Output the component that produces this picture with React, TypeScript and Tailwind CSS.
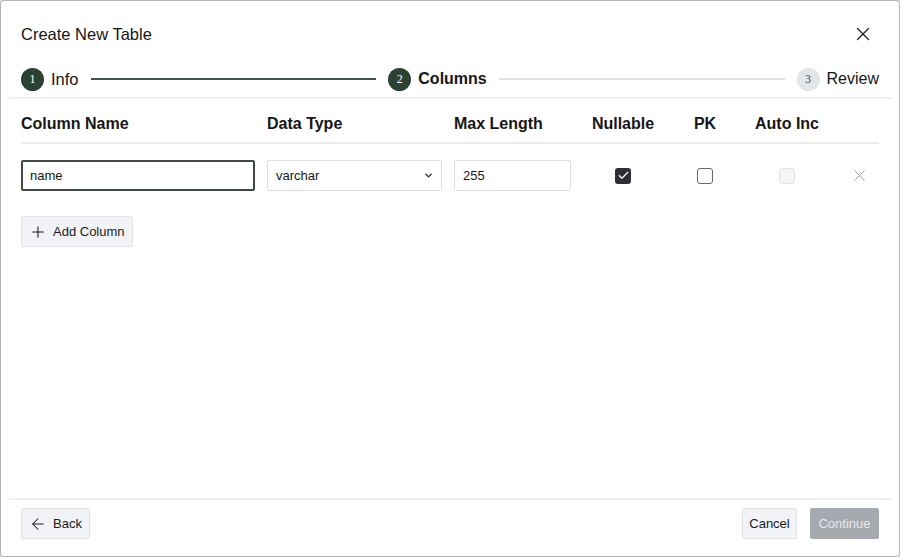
import { ArrowLeft, Check, ChevronDown, Plus, X } from 'lucide-react';

const font = { fontFamily: '"Liberation Sans", Arial, sans-serif' };

function StepDot({ n, active }: { n: number; active: boolean }) {
  return (
    <div
      className={
        active
          ? 'w-[23px] h-[23px] rounded-full bg-[#2b4233] text-white flex items-center justify-center text-[12px] shrink-0'
          : 'w-[23px] h-[23px] rounded-full bg-[#e3e5e9] text-[#444] flex items-center justify-center text-[12px] shrink-0'
      }
      style={{ fontFamily: '"Liberation Serif", "Times New Roman", serif' }}
    >
      {n}
    </div>
  );
}

export default function App() {
  const cols = 'grid grid-cols-[234px_175px_117px_80px_60px_80px_40px] gap-x-[12px] items-center';

  return (
    <div className="w-[900px] h-[557px] bg-[#d9d9d9]" style={font}>
      <div className="w-full h-full bg-white border border-[#b4b4b4] rounded-[4px] px-[8px] flex flex-col text-[#161616]">
        {/* Header */}
        <div className="px-[12px] mt-[23px] h-[20px] flex items-center justify-between">
          <h1 className="text-[16.5px] leading-[20px]">Create New Table</h1>
          <X className="w-[22px] h-[22px] text-[#222] mr-[5px]" strokeWidth={1.5} />
        </div>

        {/* Stepper */}
        <div className="px-[12px] mt-[23px] h-[24px] flex items-center">
          <StepDot n={1} active />
          <span className="ml-[7px] text-[16.5px]">Info</span>
          <div className="flex-1 h-[2px] bg-[#3f5446] mx-[12px]" />
          <StepDot n={2} active />
          <span className="ml-[7px] text-[16px] font-bold">Columns</span>
          <div className="flex-1 h-[2px] bg-[#e0e1e4] mx-[12px]" />
          <StepDot n={3} active={false} />
          <span className="ml-[7px] text-[16px]">Review</span>
        </div>

        <div className="mt-[6px] h-[2px] bg-[#efefef]" />

        {/* Table */}
        <div className="px-[12px]">
          <div className={`${cols} pt-[15px] pb-[8px] h-[43px] text-[16px] font-bold leading-[20px]`}>
            <span>Column Name</span>
            <span>Data Type</span>
            <span>Max Length</span>
            <span className="text-center">Nullable</span>
            <span className="text-center">PK</span>
            <span className="text-center">Auto Inc</span>
            <span />
          </div>
          <div className="h-[2px] bg-[#ececec]" />

          <div className={`${cols} mt-[16px] h-[31px] text-[13px]`}>
            <div className="h-[31px] border-2 border-[#3c4a40] rounded-[2px] flex items-center px-[7px]">name</div>
            <div className="h-[31px] border border-[#dedede] rounded-[2px] flex items-center justify-between pl-[8px] pr-[7px]">
              <span>varchar</span>
              <ChevronDown className="w-[11px] h-[11px] text-[#222]" strokeWidth={3} />
            </div>
            <div className="h-[31px] border border-[#dedede] rounded-[2px] flex items-center px-[8px]">255</div>
            <div className="flex justify-center">
              <div className="w-[16px] h-[16px] rounded-[3px] bg-[#2b2e35] flex items-center justify-center">
                <Check className="w-[13px] h-[13px] text-white" strokeWidth={2.2} />
              </div>
            </div>
            <div className="flex justify-center">
              <div className="w-[16px] h-[16px] rounded-[3px] border-[1.5px] border-[#6b6b6b] bg-white" />
            </div>
            <div className="flex justify-center">
              <div className="w-[16px] h-[16px] rounded-[3px] border border-[#e2e2e2] bg-[#f5f5f6]" />
            </div>
            <div className="flex justify-center">
              <X className="w-[19px] h-[19px] text-[#9c9c9c]" strokeWidth={1.2} />
            </div>
          </div>

          <button className="mt-[25px] h-[31px] w-[112px] flex items-center gap-[6px] pl-[7px] bg-[#f1f3f6] border border-[#e1e3e7] rounded-[2px] text-[13px] text-[#1a1a1a]">
            <Plus className="w-[18px] h-[18px]" strokeWidth={1.4} />
            <span>Add Column</span>
          </button>
        </div>

        <div className="flex-1" />

        {/* Footer */}
        <div className="h-[2px] bg-[#efefef]" />
        <div className="px-[12px] pt-[8px] pb-[17px] flex items-center justify-between">
          <button className="h-[31px] w-[69px] flex items-center gap-[6px] pl-[7px] bg-[#f1f3f6] border border-[#e1e3e7] rounded-[2px] text-[13px] text-[#1a1a1a]">
            <ArrowLeft className="w-[18px] h-[18px]" strokeWidth={1.4} />
            <span>Back</span>
          </button>
          <div className="flex items-center gap-[13px]">
            <button className="h-[31px] w-[55px] flex items-center justify-center bg-[#f1f3f6] border border-[#e1e3e7] rounded-[2px] text-[13px] text-[#1a1a1a]">
              Cancel
            </button>
            <button className="h-[31px] w-[69px] flex items-center justify-center bg-[#a6a9af] rounded-[2px] text-[13px] text-[#e6e8eb]">
              Continue
            </button>
          </div>
        </div>
      </div>
    </div>
  );
}
